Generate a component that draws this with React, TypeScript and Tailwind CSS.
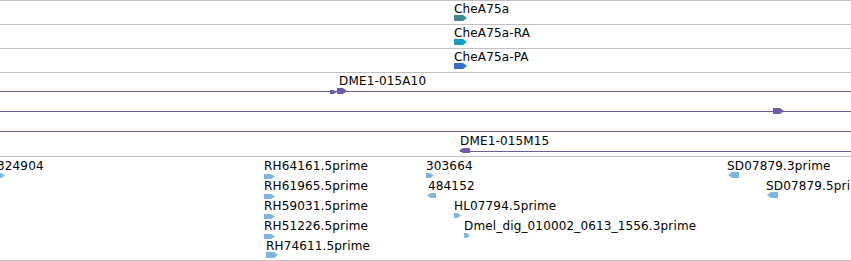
import React from 'react';

type Dir = 'right' | 'left';

function Glyph({ x, y, w, h, color, dir = 'right' }: { x: number; y: number; w: number; h: number; color: string; dir?: Dir }) {
  const tip = Math.min(4, w / 2);
  const points =
    dir === 'right'
      ? `0,0 ${w - tip},0 ${w},${h / 2} ${w - tip},${h} 0,${h}`
      : `${w},0 ${tip},0 0,${h / 2} ${tip},${h} ${w},${h}`;
  return (
    <svg className="absolute" style={{ left: x, top: y }} width={w} height={h} viewBox={`0 0 ${w} ${h}`}>
      <polygon points={points} fill={color} />
    </svg>
  );
}

function Label({ x, y, text }: { x: number; y: number; text: string }) {
  return (
    <span className="absolute whitespace-nowrap text-[12px] leading-[14px] tracking-[0.15px] text-black" style={{ left: x, top: y }}>
      {text}
    </span>
  );
}

const EST = '#7db6e0';
const PURPLE = '#6e5aa5';

const geneTracks = [
  { name: 'CheA75a', color: '#3c8c91' },
  { name: 'CheA75a-RA', color: '#14a0c3' },
  { name: 'CheA75a-PA', color: '#326ed2' },
];

const ests: { text: string; x: number; y: number; gx: number; gy: number; gw: number; gh: number; dir?: Dir }[] = [
  { text: '324904', x: -3, y: 2, gx: -6, gy: 16, gw: 11, gh: 5 },
  { text: 'RH64161.5prime', x: 264, y: 2, gx: 264, gy: 17, gw: 11, gh: 5 },
  { text: 'RH61965.5prime', x: 264, y: 22, gx: 264, gy: 37, gw: 11, gh: 5 },
  { text: 'RH59031.5prime', x: 264, y: 42, gx: 264, gy: 57, gw: 11, gh: 5 },
  { text: 'RH51226.5prime', x: 264, y: 62, gx: 264, gy: 77, gw: 11, gh: 5 },
  { text: 'RH74611.5prime', x: 266, y: 82, gx: 266, gy: 95, gw: 12, gh: 6 },
  { text: '303664', x: 426, y: 2, gx: 426, gy: 16, gw: 8, gh: 5 },
  { text: '484152', x: 428, y: 22, gx: 427, gy: 36, gw: 9, gh: 5, dir: 'left' },
  { text: 'HL07794.5prime', x: 454, y: 42, gx: 454, gy: 56, gw: 7, gh: 5 },
  { text: 'Dmel_dig_010002_0613_1556.3prime', x: 464, y: 62, gx: 464, gy: 76, gw: 6, gh: 5 },
  { text: 'SD07879.3prime', x: 727, y: 2, gx: 728, gy: 15, gw: 11, gh: 6, dir: 'left' },
  { text: 'SD07879.5prime', x: 766, y: 22, gx: 767, gy: 35, gw: 11, gh: 6, dir: 'left' },
];

export default function App() {
  return (
    <div className="w-[851px] h-[261px] overflow-hidden bg-white font-['DejaVu_Sans',sans-serif]">
      <div className="flex flex-col">
        {geneTracks.map((t) => (
          <div key={t.name} className="relative h-[24px] border-t border-[#c0c0c0]">
            <Label x={454} y={1} text={t.name} />
            <Glyph x={454} y={14} w={13} h={6} color={t.color} />
          </div>
        ))}

        {/* clones */}
        <div className="relative h-[84px] border-t border-[#c0c0c0]">
          <Label x={339} y={1} text="DME1-015A10" />
          <div className="absolute left-0 right-0 top-[18px] h-px bg-[#6e5aa5]" />
          <Glyph x={330} y={17} w={7} h={4} color={PURPLE} />
          <Glyph x={337} y={15} w={10} h={6} color={PURPLE} />
          <div className="absolute left-0 right-0 top-[38px] h-px bg-[#6e5aa5]" />
          <Glyph x={773} y={35} w={11} h={6} color={PURPLE} />
          <div className="absolute left-0 right-0 top-[58px] h-px bg-[#6e5aa5]" />
          <Label x={460} y={61} text="DME1-015M15" />
          <div className="absolute left-[460px] right-0 top-[78px] h-px bg-[#6e5aa5]" />
          <Glyph x={459} y={75} w={11} h={5} color={PURPLE} dir="left" />
        </div>

        {/* ESTs */}
        <div className="relative h-[105px] border-y border-[#c0c0c0]">
          {ests.map((e) => (
            <React.Fragment key={e.text}>
              <Label x={e.x} y={e.y} text={e.text} />
              <Glyph x={e.gx} y={e.gy} w={e.gw} h={e.gh} color={EST} dir={e.dir} />
            </React.Fragment>
          ))}
        </div>
      </div>
    </div>
  );
}
